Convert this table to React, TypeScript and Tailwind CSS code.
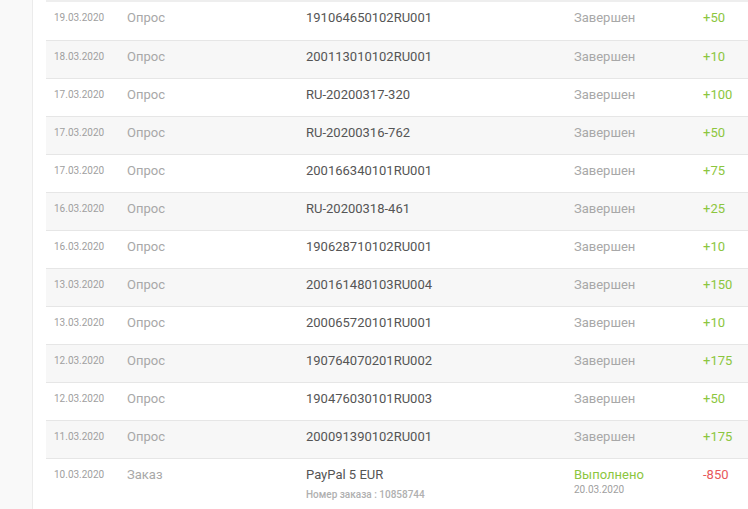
import React from "react";

type Row = { date: string; type: string; num: string; status: string; amount: string };

const rows: Row[] = [
  { date: "19.03.2020", type: "Опрос", num: "191064650102RU001", status: "Завершен", amount: "+50" },
  { date: "18.03.2020", type: "Опрос", num: "200113010102RU001", status: "Завершен", amount: "+10" },
  { date: "17.03.2020", type: "Опрос", num: "RU-20200317-320", status: "Завершен", amount: "+100" },
  { date: "17.03.2020", type: "Опрос", num: "RU-20200316-762", status: "Завершен", amount: "+50" },
  { date: "17.03.2020", type: "Опрос", num: "200166340101RU001", status: "Завершен", amount: "+75" },
  { date: "16.03.2020", type: "Опрос", num: "RU-20200318-461", status: "Завершен", amount: "+25" },
  { date: "16.03.2020", type: "Опрос", num: "190628710102RU001", status: "Завершен", amount: "+10" },
  { date: "13.03.2020", type: "Опрос", num: "200161480103RU004", status: "Завершен", amount: "+150" },
  { date: "13.03.2020", type: "Опрос", num: "200065720101RU001", status: "Завершен", amount: "+10" },
  { date: "12.03.2020", type: "Опрос", num: "190764070201RU002", status: "Завершен", amount: "+175" },
  { date: "12.03.2020", type: "Опрос", num: "190476030101RU003", status: "Завершен", amount: "+50" },
  { date: "11.03.2020", type: "Опрос", num: "200091390102RU001", status: "Завершен", amount: "+175" },
];

export default function App() {
  return (
    <div
      className="flex h-[509px] w-[748px] overflow-hidden bg-[#f9f9f9]"
      style={{ fontFamily: "Roboto, 'Noto Sans', sans-serif" }}
    >
      <div className="w-[33px] shrink-0 border-r border-[#ebebeb]" />
      <div className="flex-1 overflow-hidden bg-white pl-[13px]">
        <div className="w-[760px] border-t-2 border-[#eeeeee]">
          {rows.map((r, i) => (
            <div
              key={i}
              className={`flex h-[38px] items-start pt-[8px] text-[13px] leading-[16px] ${
                i > 0 ? "border-t border-[#e6e6e6]" : ""
              } ${i % 2 === 1 ? "bg-[#f7f7f7]" : "bg-white"}`}
            >
              <div className="w-[74px] shrink-0 pl-[8px] text-[10px] text-[#a0a0a0]">{r.date}</div>
              <div className="w-[179px] shrink-0 pl-[7px] text-[#a8a8a8]">{r.type}</div>
              <div className="w-[268px] shrink-0 pl-[7px] text-[#555555]">{r.num}</div>
              <div className="w-[129px] shrink-0 pl-[7px] text-[#a8a8a8]">{r.status}</div>
              <div className="w-[100px] shrink-0 pl-[7px] text-[#8cc63e]">{r.amount}</div>
            </div>
          ))}
          <div className="flex h-[60px] items-start border-t border-[#e6e6e6] bg-white pt-[8px] text-[13px] leading-[16px]">
            <div className="w-[74px] shrink-0 pl-[8px] text-[10px] text-[#a0a0a0]">10.03.2020</div>
            <div className="w-[179px] shrink-0 pl-[7px] text-[#a8a8a8]">Заказ</div>
            <div className="w-[268px] shrink-0 pl-[7px]">
              <div className="text-[#555555]">PayPal 5 EUR</div>
              <div className="mt-[6px] text-[10px] font-medium leading-[12px] text-[#b0b0b0]">Номер заказа : 10858744</div>
            </div>
            <div className="w-[129px] shrink-0 pl-[7px]">
              <div className="text-[#8cc63e]">Выполнено</div>
              <div className="mt-[1px] text-[10px] leading-[12px] text-[#a0a0a0]">20.03.2020</div>
            </div>
            <div className="w-[100px] shrink-0 pl-[7px] text-[#e8585a]">-850</div>
          </div>
        </div>
      </div>
    </div>
  );
}
